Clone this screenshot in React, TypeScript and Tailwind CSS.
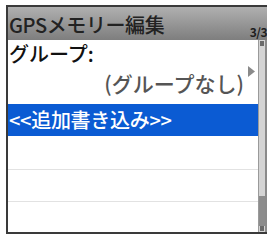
export default function App() {
  return (
    <div
      className="w-[267px] h-[234px] bg-white pl-[6px] pt-[5px] overflow-hidden"
      style={{ fontFamily: '"Noto Sans CJK JP", "Noto Sans", sans-serif' }}
    >
      <div className="w-[261px] h-[229px] border-l-2 border-t-2 border-b-2 border-[#3a3a3a] flex flex-col">
        {/* title bar */}
        <div className="h-[33px] bg-gradient-to-b from-[#b0b0b0] to-[#7e7e7e] flex items-end justify-between pl-[1px]">
          <span className="text-[20px] leading-[28px] font-medium text-[#222] tracking-[-0.4px] mb-[1px]">GPSメモリー編集</span>
          <span className="text-[12px] leading-[14px] font-bold text-[#1e1e1e] mb-[1px] tracking-[-0.5px]">3/3</span>
        </div>

        <div className="flex-1 flex">
          {/* list */}
          <div className="w-[250px] flex flex-col">
            <div className="h-[28px] pl-[1px] text-[20px] leading-[28px] font-medium text-[#111]">グループ:</div>
            <div className="h-[34px] flex items-start justify-end pr-[14px] relative">
              <span className="text-[21px] leading-[30px] font-medium text-[#555]">(グループなし)</span>
              <svg className="absolute right-[3px] top-[-2px]" width="7" height="11" viewBox="0 0 7 11">
                <path d="M0 0 L7 5.5 L0 11 Z" fill="#8a8a8a" />
              </svg>
            </div>
            <div className="h-[32px] bg-[#0b5bd3] flex items-center pl-[1px] mt-[2px]">
              <span className="text-[20px] leading-[26px] font-medium text-white tracking-[-0.3px]">&lt;&lt;追加書き込み&gt;&gt;</span>
            </div>
            <div className="h-[34px] border-b border-[#e2e2e2]"></div>
            <div className="h-[32px] border-b border-[#e2e2e2]"></div>
            <div className="flex-1"></div>
          </div>

          {/* scrollbar */}
          <div className="w-[7px] bg-[#d4d4d4] border-l border-[#9a9a9a] flex flex-col">
            <div className="h-[5px] bg-[#6a6a6a] mx-[1px] mt-[1px]"></div>
            <div className="flex-1"></div>
            <div className="h-[30px] bg-[#8c8c8c]"></div>
            <div className="h-[5px] bg-[#6a6a6a] mx-[1px] mb-[1px]"></div>
          </div>
          <div className="w-[2px] bg-[#8a8a8a]"></div>
        </div>
      </div>
    </div>
  );
}
